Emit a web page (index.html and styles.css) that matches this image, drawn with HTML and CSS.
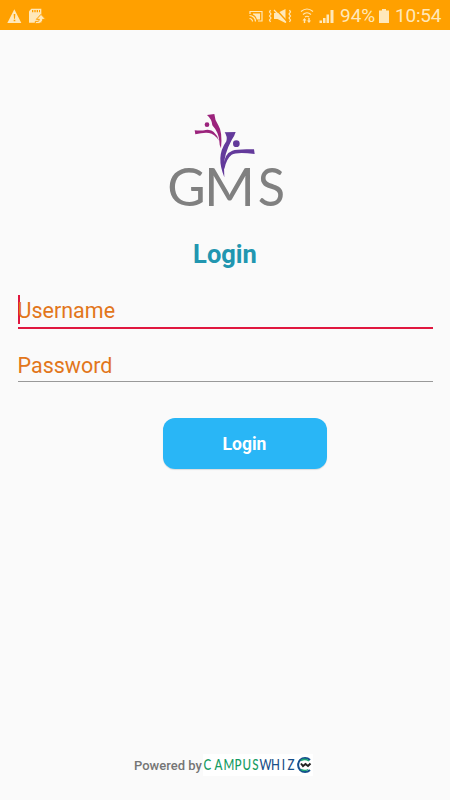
FILE: index.html
```html
<!DOCTYPE html>
<html lang="en">
<head>
    <meta charset="UTF-8">
    <meta name="viewport" content="width=device-width, initial-scale=1.0">
    <title>GMS Login</title>
    <link rel="stylesheet" href="styles.css">
</head>
<body>

<header class="status-bar">
    <svg class="status-icons" width="50" height="30" viewBox="0 0 150 90">
        <path d="M43 25 L64 66 H22 Z"/>
        <path class="cut" d="M41 39h5l-1 14h-3zM41 56h5v5h-5z"/>
        <path d="M94 23h30v42H87V31z"/>
        <path class="cut" d="M96 27h4v7h-4zM103 27h4v7h-4zM110 27h4v7h-4zM117 27h3v7h-3z"/>
        <path class="arrow" d="M106 68c14 1 22-4 22-13h9l-14-15-14 15h9c0 6-4 7-12 6z"/>
    </svg>
    <svg class="status-icons" width="100" height="30" viewBox="240 0 100 30">
        <!-- cast -->
        <g class="line">
            <path d="M250 13v-2.500h12v9.500h-4"/>
            <path d="M249.500 14.500a6 6 0 0 1 6 6M249.500 17.500a3 3 0 0 1 3 3"/>
        </g>
        <path d="M253 12.500h7v6h-3q-1-4-4-5z"/>
        <!-- vibrate / mute -->
        <path d="M274 12h3.500l8-4v14l-8-4H274z"/>
        <path class="cut-line" d="M276 8.500l12 13"/>
        <g class="line">
            <path d="M274 9l12 12.500"/>
            <path d="M270.500 9l-1 2 1.500 2-1.500 2 1.500 2-1.500 2 1 2M289.500 9l1 2-1.500 2 1.500 2-1.500 2 1.500 2-1 2"/>
        </g>
        <!-- wifi -->
        <g class="line">
            <path d="M301 10.500q6-5 12 0M303 13.500q4-3.500 8 0M305 16q2-1.500 4 0"/>
        </g>
        <path d="M302.500 19.500l2-2.500 2 2.500h-1.300v2.500h-1.400v-2.500zM307 19.500h1.300v-2.500h1.400v2.500h1.300l-2 2.500z"/>
        <!-- signal -->
        <path d="M319.500 19.500h2.500v2.500h-2.500zM323 17h2.500v5H323zM326.500 13.500h2.500v8.500h-2.500zM330.500 9h3v13h-3z"/>
    </svg>
    <span class="battery-level">94%</span>
    <svg class="battery" width="10" height="14" viewBox="0 0 10 14">
        <path d="M3 0h4v1.500h3V14H0V1.500h3z"/>
    </svg>
    <span class="clock">10:54</span>
</header>

<main class="login">
    <svg class="logo" width="140" height="120" viewBox="0 0 420 360">
        <g class="figure-left">
            <path d="M156 45L178 42Q179 60 190 76Q203 96 198 145Q193 138 193 124Q191 97 172 76Q171 58 156 45Z"/>
            <path d="M119 91Q140 93 152 90Q180 85 192 122Q178 101 162 99Q145 97 121 103Z"/>
            <circle cx="156" cy="74" r="7"/>
        </g>
        <text class="logo-text" y="317">
            <tspan x="37">G</tspan><tspan x="147" textLength="153" lengthAdjust="spacingAndGlyphs">M</tspan><tspan x="308" textLength="82" lengthAdjust="spacingAndGlyphs">S</tspan>
        </text>
        <g class="figure-right">
            <path d="M209 97L242 96Q239 107 230 120Q206 164 207 202L208 232Q195 200 196 175Q197 148 214 124Q218 110 209 97Z"/>
            <path d="M205 200Q208 160 232 152Q247 146 297 148L299 162Q246 155 230 164Q214 176 208 207Z"/>
            <circle cx="244" cy="131" r="10"/>
        </g>
    </svg>

    <h1 class="title">Login</h1>

    <form class="login-form">
        <input type="text" class="field active" placeholder="Username" aria-label="Username">
        <input type="password" class="field" placeholder="Password" aria-label="Password">
        <button type="button" class="btn">Login</button>
    </form>
</main>

<footer class="footer">
    <span>Powered by</span>
    <svg class="brand" width="110" height="22" viewBox="0 0 110 22">
        <rect class="brand-bg" width="110" height="22"/>
        <g transform="scale(0.8 1)">
            <text class="brand-green" x="0.500 14.500 25.500 39.500 49.500 61.500" y="16">CAMPUS</text>
            <text class="brand-blue" x="70.500 85 98.500 105.500" y="16">WHIZ</text>
        </g>
        <path class="ring" d="M107 6A7 7 0 1 0 107 16"/>
        <path class="ring-green" d="M98 6.500Q102 4 106 7M98 15.500Q102 17.500 105 15.500"/>
        <path class="glasses" d="M98 9.500l2 2.500 2.500-2 2.500 2 2.500-2.500"/>
    </svg>
</footer>

</body>
</html>
```

FILE: styles.css
```css
* {
    box-sizing: border-box;
}
body {
    margin: 0;
    height: 800px;
    display: flex;
    flex-direction: column;
    font-family: Roboto, sans-serif;
    background-color: #fafafa;
}
.status-bar {
    display: flex;
    align-items: center;
    height: 30px;
    padding-top: 1px;
    background-color: #ffa000;
    color: #ffe8ba;
    font-size: 19px;
    line-height: 29px;
}
.status-icons,
.battery {
    fill: #ffe8ba;
}
.status-icons:nth-child(2) {
    margin-left: 190px;
}
.line {
    fill: none;
    stroke: #ffe8ba;
    stroke-width: 1.2;
}
.cut {
    fill: #ffa000;
}
.cut-line {
    fill: none;
    stroke: #ffa000;
    stroke-width: 1.5;
}
.arrow {
    stroke: #ffa000;
    stroke-width: 3;
}
.battery-level {
    width: 39px;
}
.clock {
    margin-left: 6px;
    letter-spacing: -0.2px;
}
.login {
    flex: 1;
    display: flex;
    flex-direction: column;
    align-items: center;
    padding: 70px 17px 0;
}
.logo {
    flex: none;
}
.logo-text {
    font-family: Lato, sans-serif;
    font-size: 158px;
    fill: #808080;
}
.figure-left {
    fill: #9b237c;
}
.figure-right {
    fill: #633a9b;
}
.title {
    margin: 19px 0 0;
    font-size: 25.5px;
    line-height: 30px;
    font-weight: 700;
    color: #2196b0;
}
.login-form {
    width: 100%;
    margin-top: 26px;
}
.field {
    display: block;
    width: 415px;
    height: 32px;
    margin: 0 0 0 0.5px;
    padding: 0 0 1px;
    border: none;
    border-bottom: 1px solid #999;
    outline: none;
    background: none;
    font: 21.5px/29px Roboto, sans-serif;
}
.field.active {
    height: 34px;
    padding-bottom: 2px;
    margin-bottom: 21px;
    border-bottom: 2px solid #e0173f;
    /* text cursor */
    background: linear-gradient(#e0173f, #e0173f) 0 0 / 2px 29px no-repeat;
}
.field::placeholder {
    color: #e2761b;
    opacity: 1;
}
.btn {
    display: block;
    width: 164px;
    height: 51px;
    margin: 36px 0 0 145.5px;
    border: none;
    border-radius: 12px;
    background-color: #29b6f6;
    box-shadow: 0 1px 1px rgba(0, 0, 0, 0.12);
    color: white;
    font: 700 17.5px Roboto, sans-serif;
    cursor: pointer;
}
.footer {
    display: flex;
    align-items: center;
    height: 22px;
    margin: 0 0 24px 134px;
    font-size: 13px;
    font-weight: 500;
    color: #757575;
}
.footer span {
    width: 69px;
    white-space: nowrap;
}
.brand-bg {
    fill: white;
}
.brand text {
    font-family: Lato, sans-serif;
    font-size: 14.5px;
}
.brand-green {
    fill: #159b62;
}
.brand-blue {
    fill: #194f88;
}
.ring,
.ring-green,
.glasses {
    fill: none;
    stroke: #154f8d;
    stroke-width: 2;
}
.ring-green {
    stroke: #20a775;
    stroke-width: 1.5;
}
.glasses {
    stroke: #222;
}
```
